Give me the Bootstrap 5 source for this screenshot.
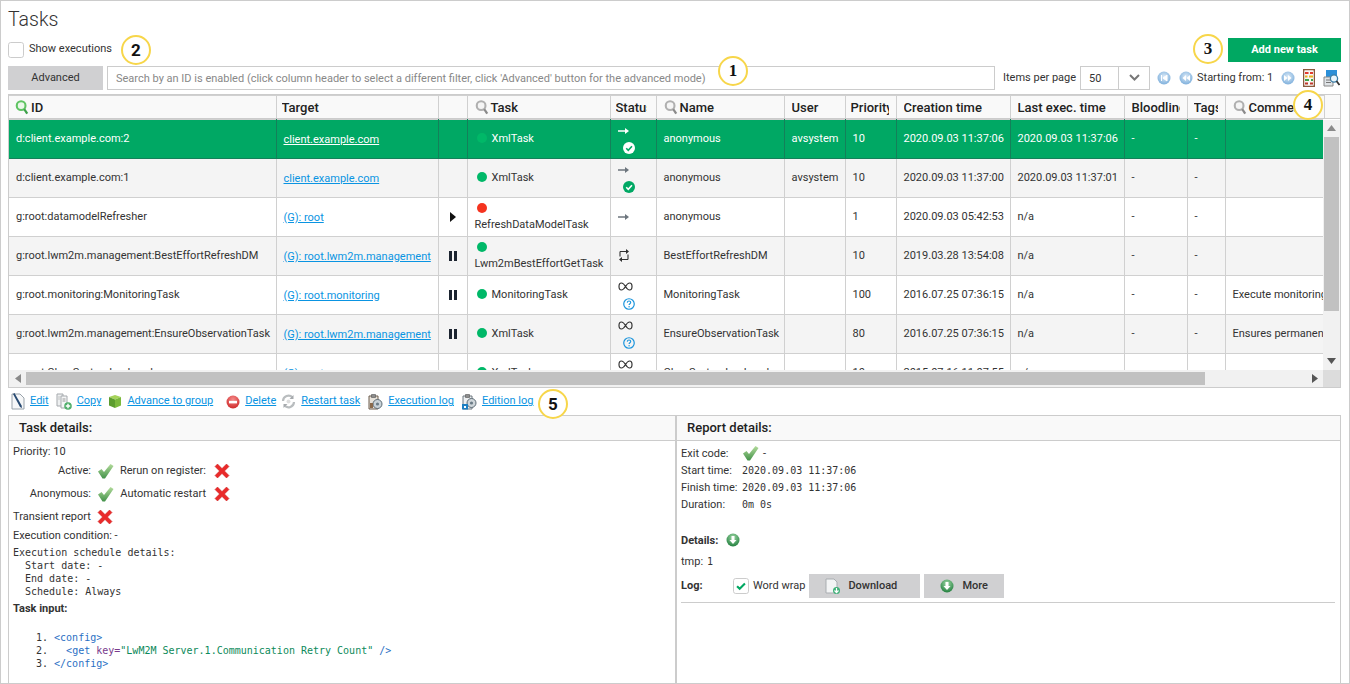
<!DOCTYPE html>
<html lang="en">
<head>
    <meta charset="UTF-8">
    <meta name="viewport" content="width=device-width, initial-scale=1.0">
    <title>Tasks</title>
    <link href="https://cdn.jsdelivr.net/npm/bootstrap@5.3.0/dist/css/bootstrap.min.css" rel="stylesheet">
    <style>
        html, body { height: 100%; overflow: hidden; }
        body { font-family: Roboto, "Liberation Sans", sans-serif; font-size: 11px; color: #333; background: #fff; }
        a { color: #0a94e2; }
        .tk-page { position: relative; height: 684px; border: 1px solid #ccc; padding: 0 8px 0 7px; overflow: hidden; }
        .tk-title { font-size: 19.5px; font-weight: 300; line-height: 24px; margin: 7px 0 0; height: 30px; color: #333; }
        .tk-row2 { height: 28px; }
        .tk-show { margin-left: 5px; margin-top: -1px; }
        .tk-check { width: 16px; height: 16px; border: 1px solid #ccc; border-radius: 0; margin: 0; flex: none; box-shadow: none; }
        .tk-check:checked { background-color: #fff; border-color: #ccc; background-image: url("data:image/svg+xml,%3Csvg xmlns='http://www.w3.org/2000/svg' viewBox='0 0 16 16'%3E%3Cpath d='M3.500 8.200l3 3 6-6' fill='none' stroke='%2300a862' stroke-width='2.400'/%3E%3C/svg%3E"); }
        .tk-add { width: 113px; height: 24px; padding: 1px 0 0; border: 0; border-radius: 0; background: #00a862; color: #fff; font-size: 11px; font-weight: 700; }
        .tk-row3 { height: 24px; margin-bottom: 4px; white-space: nowrap; }
        .tk-adv { width: 95px; height: 24px; padding: 2px 0 0; border: 0; border-radius: 0; background: #d0d0d2; color: #333; font-size: 11px; flex: none; }
        .tk-search { width: 888px; height: 24px; margin-left: 4px; padding: 2px 8px 0; border: 1px solid #ccc; border-radius: 0; font-size: 11px; color: #333; flex: none; }
        .tk-search::placeholder { color: #888; opacity: 1; }
        .tk-perpage { margin-left: 8px; width: 77px; padding-top: 2px; flex: none; }
        .tk-select { width: 70px; height: 24px; border: 1px solid #ccc; flex: none; }
        .tk-select-val { width: 38px; padding: 2px 0 0 8px; line-height: 20px; border-right: 1px solid #ccc; }
        .tk-select-arrow { flex: 1; }
        .tk-pager { margin-left: 7px; }
        .tk-pager-text { padding-top: 2px; }
        .tk-grid-box { border: 1px solid #ccc; height: 294px; width: 1333px; }
        .tk-grid-view { width: 1314px; height: 251px; overflow: hidden; flex: none; }
        .tk-head-view { width: 1331px; overflow: hidden; background: #f9f9f9; border-bottom: 1px solid #ccc; }
        .tk-grid { table-layout: fixed; width: 1315px; margin: 0; --bs-table-bg: transparent; --bs-table-border-color: #d0d0d0; font-size: 11px; color: #333; border-color: #d0d0d0; }
        .tk-grid th, .tk-grid td { padding: 0 7px; overflow: hidden; white-space: nowrap; vertical-align: middle; line-height: 16px; border-top: 0; }
        .tk-grid tr > :first-child { border-left: 0; }
        .tk-grid th { height: 23px; padding: 2px 7px 0 5px; background: #f9f9f9; font-size: 13px; font-weight: 500; color: #222; border-bottom: 0; }
        .tk-grid th.tk-th-first { padding-left: 4px; }
        .tk-grid th.tk-th-wide { padding-left: 7px; }
        .tk-grid th.tk-th-mid { padding-left: 6px; }
        .tk-grid td { height: 39px; border-bottom: 1px solid #d0d0d0; }
        .tk-grid td a { display: inline-block; padding-top: 2px; }
        .tk-grid tbody tr:nth-child(even) td { background: #f4f4f4; }
        .tk-grid tbody tr.tk-sel td { background: #00a864; color: #fff; border-color: #14805a; }
        .tk-grid tbody tr.tk-sel a { color: #fff; }
        .tk-clip { overflow: hidden; }
        .tk-clip-status { width: 31px; }
        .tk-mag { width: 14px; height: 16px; margin: 0 2px 0 2px; vertical-align: text-bottom; }
        .c-id { width: 267px; } .c-target { width: 162px; } .c-ctl { width: 29px; } .c-task { width: 143px; }
        .c-status { width: 46px; } .c-name { width: 128px; } .c-user { width: 61px; } .c-prio { width: 51px; }
        .c-created { width: 114px; } .c-last { width: 114px; } .c-blood { width: 63px; } .c-tags { width: 38px; } .c-comment { width: 99px; }
        .tk-dot { display: inline-block; width: 10px; height: 10px; border-radius: 50%; background: #00b868; margin: 0 5px 0 2px; vertical-align: -1px; }
        .tk-dot-red { background: #f5331f; }
        .tk-stack { padding-top: 3px; }
        .tk-stat-sub { margin: 7px 0 0 5px; }
        .tk-okc-w { color: #fff; --tick: #00a864; }
        .tk-okc-g { color: #00a864; --tick: #fff; }
        .tk-hbar { height: 17px; background: #f1f1f1; }
        .tk-hthumb { width: 1179px; height: 13px; background: #c1c1c1; }
        .tk-vbar { width: 17px; background: #f1f1f1; height: 250px; margin-top: 1px; flex: none; }
        .tk-vthumb { width: 15px; height: 174px; background: #c1c1c1; }
        .tk-corner { width: 17px; height: 17px; background: #dcdcdc; flex: none; }
        .tk-arrow-cell { width: 17px; height: 17px; }
        .tk-arrow-space { flex: 1; }
        .tk-actions { height: 27px; gap: 5px; padding: 1px 0 0 3px; }
        .tk-actions a { margin-right: 2px; }
        .tk-panels { width: 1333px; height: 270px; }
        .tk-panel { border: 1px solid #ccc; border-bottom: 0; overflow: hidden; }
        .tk-panel-left { width: 668px; }
        .tk-panel-right { width: 665px; }
        .tk-panel-head { height: 25px; line-height: 24px; padding-left: 10px; background: #f9f9f9; border-bottom: 1px solid #ccc; font-size: 13px; font-weight: 500; color: #222; }
        .tk-panel-body { padding: 3px 4px; line-height: 16px; }
        .tk-flag { height: 23px; white-space: nowrap; }
        .tk-flag-label { width: 78px; text-align: right; margin-right: 6px; }
        .tk-flag-label2 { width: 87px; text-align: right; margin: 0 8px 0 5px; }
        .tk-cond { margin-top: -1px; }
        .tk-mono { font-family: "DejaVu Sans Mono", monospace; font-size: 10px; line-height: 13px; margin: 0; color: #333; }
        .tk-sched { margin-top: 2px; }
        .tk-input-title { margin-top: 3px; }
        .tk-tag { color: #2a6fc4; } .tk-attr { color: #7a3b8c; } .tk-str { color: #0c8a5a; }
        .tk-code { margin: 14px 0 0; padding-left: 23px; }
        .tk-strong { font-weight: 700; }
        .tk-kv { height: 17px; line-height: 17px; }
        .tk-kv-first { margin-top: 1px; }
        .tk-kv-details { margin-top: 19px; }
        .tk-kv-tmp { margin-top: 4px; }
        .tk-log { margin-top: 4px; white-space: nowrap; }
        .tk-kv-label { width: 61px; flex: none; }
        .tk-log-label { width: 52px; flex: none; }
        .tk-logbtn { height: 24px; padding: 1px 0 0; border: 0; border-radius: 0; background: #d0d0d2; color: #333; font-size: 11px; font-weight: 500; flex: none; }
        .tk-logbtn-dl { width: 111px; margin-left: 4px; }
        .tk-logbtn-more { width: 80px; margin-left: 4px; }
        .tk-rule { height: 1px; background: #ccc; margin: 4px 1px 0 0; }
        .tk-note { position: absolute; width: 30px; height: 30px; border: 2px solid #f7d64a; border-radius: 50%; background: #fff; color: #111; text-align: center; font-size: 17px; line-height: 26px; font-weight: 700; }
        .tk-note-serif { font-family: "Liberation Serif", serif; }
        .tk-n1 { left: 717px; top: 55px; } .tk-n2 { left: 120px; top: 34px; } .tk-n3 { left: 1192px; top: 33px; }
        .tk-n4 { left: 1292px; top: 89px; } .tk-n5 { left: 537px; top: 388px; }
    </style>
</head>
<body>
    <svg width="0" height="0" class="d-block">
        <defs>
            <radialGradient id="gBlue" cx="50%" cy="40%" r="60%"><stop offset="0" stop-color="#dcebf8"/><stop offset="1" stop-color="#7fb0dc"/></radialGradient>
            <radialGradient id="gGreen" cx="50%" cy="30%" r="70%"><stop offset="0" stop-color="#9cd6a4"/><stop offset="1" stop-color="#23803f"/></radialGradient>
            <radialGradient id="gRed" cx="50%" cy="30%" r="70%"><stop offset="0" stop-color="#f58a8a"/><stop offset="1" stop-color="#cf2a2a"/></radialGradient>
            <linearGradient id="gCheck" x1="0" y1="0" x2="0" y2="1"><stop offset="0" stop-color="#b4dc9c"/><stop offset="1" stop-color="#43924a"/></linearGradient>
            <symbol id="i-mag-green" viewBox="0 0 16 17"><circle cx="7" cy="7" r="5" fill="#eaf8ea" stroke="#5fc463" stroke-width="2.400"/><path d="M10.500 11l3.500 5" stroke="#3ea14a" stroke-width="2.600"/></symbol>
            <symbol id="i-mag-gray" viewBox="0 0 16 17"><circle cx="7" cy="7" r="5" fill="#f5f5f5" stroke="#b0b0b0" stroke-width="2.400"/><path d="M10.500 11l3.500 5" stroke="#8b8b8b" stroke-width="2.600"/></symbol>
            <symbol id="i-arrow" viewBox="0 0 11 8"><path d="M0 4h8" stroke="currentColor" stroke-width="1.500"/><path d="M7 1l4 3-4 3z" fill="currentColor"/></symbol>
            <symbol id="i-loop" viewBox="0 0 12 15"><path d="M2 3.500h8M2 11.500h8M2 3.500v5M10 6.500v5" fill="none" stroke="#333" stroke-width="1.100"/><path d="M8 1l3 2.500L8 6zM4 9l-3 2.500L4 14z" fill="#333"/></symbol>
            <symbol id="i-inf" viewBox="0 0 15 9"><path d="M7.500 4.500C6 2 4.800 1 3.400 1 1.900 1 1 2.600 1 4.500S1.900 8 3.400 8c1.400 0 2.600-1 4.100-3.500C9 2 10.200 1 11.600 1 13.100 1 14 2.600 14 4.500S13.100 8 11.600 8C10.200 8 9 7 7.500 4.500z" fill="none" stroke="#333" stroke-width="1.200"/></symbol>
            <symbol id="i-okc" viewBox="0 0 13 13"><circle cx="6.500" cy="6.500" r="6.500" fill="currentColor"/><path d="M3.500 6.800l2.200 2.200 4-4.400" fill="none" stroke="var(--tick)" stroke-width="1.700"/></symbol>
            <symbol id="i-help" viewBox="0 0 13 13"><circle cx="6.500" cy="6.500" r="5.700" fill="none" stroke="#1a94dc" stroke-width="1.300"/><path d="M4.600 5c.2-1.200 1-1.700 1.900-1.700 1.100 0 1.900.7 1.900 1.600 0 1.300-1.800 1.400-1.800 2.800" fill="none" stroke="#1a94dc" stroke-width="1.200"/><circle cx="6.600" cy="9.500" r=".8" fill="#1a94dc"/></symbol>
            <symbol id="i-pause" viewBox="0 0 8 10"><path d="M0 0h3v10H0zM5 0h3v10H5z" fill="#1c2430"/></symbol>
            <symbol id="i-play" viewBox="0 0 8 10"><path d="M1 0l6 5-6 5z" fill="#111"/></symbol>
            <symbol id="i-first" viewBox="0 0 14 14"><circle cx="7" cy="7" r="6.500" fill="url(#gBlue)"/><path d="M4.500 4v6M10 4L6 7l4 3z" fill="#fff" stroke="#fff"/></symbol>
            <symbol id="i-prev" viewBox="0 0 14 14"><circle cx="7" cy="7" r="6.500" fill="url(#gBlue)"/><path d="M7 4L3.500 7 7 10zM11 4L7.500 7 11 10z" fill="#fff"/></symbol>
            <symbol id="i-next" viewBox="0 0 14 14"><circle cx="7" cy="7" r="6.500" fill="url(#gBlue)"/><path d="M7 4l3.500 3L7 10zM3 4l3.500 3L3 10z" fill="#fff"/></symbol>
            <symbol id="i-abacus" viewBox="0 0 12 18"><path d="M0 0h12v1.500H0zM0 16.500h12V18H0zM0 1h1.500v16H0zM10.500 1H12v16h-1.500z" fill="#8a5a3c"/><path d="M1.500 1.500h9v15h-9z" fill="#f8f6f2"/><path d="M2 3h3.500v2H2zM7 3h3v2H7z" fill="#e23b2e"/><path d="M2 6.500h2.500v2H2zM6 6.500h4v2H6z" fill="#e8b020"/><path d="M2 10h4v2H2zM8 10h2v2H8z" fill="#3fa34a"/><path d="M2 13.500h3v2H2zM7 13.500h3v2H7z" fill="#c0392b"/></symbol>
            <symbol id="i-report" viewBox="0 0 17 18"><path d="M3 1h11v9H3z" fill="#2b8fd8"/><path d="M1 8h9v9H1z" fill="#dfe3e6" stroke="#888"/><circle cx="11" cy="9.500" r="3.600" fill="#e9f5fc" stroke="#3a7ea8" stroke-width="1.300"/><path d="M13.500 12l3 4" stroke="#333" stroke-width="1.800"/><path d="M3 11h5M3 13.500h5" stroke="#777"/></symbol>
            <symbol id="i-edit" viewBox="0 0 14 17"><path d="M1 1h8l4 4v11H1z" fill="#f6f7f8" stroke="#9aa3ab"/><path d="M2 1l7 13 2 1-.4-2.400L3.500 0z" fill="#284a72"/></symbol>
            <symbol id="i-copy" viewBox="0 0 16 17"><path d="M1 1h6v12H1z" fill="#eef0f1" stroke="#a5a9ad"/><path d="M5 3h6v12H5z" fill="#f5f6f7" stroke="#a5a9ad"/><path d="M6.500 6h3M6.500 8h3M2.500 4h1M2.500 6h1" stroke="#999"/><circle cx="12" cy="13" r="3.800" fill="#4fae6a"/><path d="M12 10.800v4.400M9.800 13h4.400" stroke="#fff" stroke-width="1.400"/></symbol>
            <symbol id="i-cube" viewBox="0 0 14 15"><path d="M1 3l6-2 6 2-6 2.500z" fill="#a6d35a"/><path d="M1 3l6 2.500V14l-6-2.500z" fill="#5c9c2e"/><path d="M13 3L7 5.500V14l6-2.500z" fill="#7bb83c"/></symbol>
            <symbol id="i-del" viewBox="0 0 14 14"><circle cx="7" cy="7" r="6.500" fill="url(#gRed)"/><path d="M3 5.800h8v2.600H3z" fill="#fff"/></symbol>
            <symbol id="i-restart" viewBox="0 0 15 15"><path d="M2 7a5.500 5.500 0 0 1 9.500-3.600M13 8a5.500 5.500 0 0 1-9.500 3.600" fill="none" stroke="#b9bdbf" stroke-width="2.200"/><path d="M12.500 1v4h-4zM2.500 14v-4h4z" fill="#a6aaad"/><circle cx="7.500" cy="7.500" r="2" fill="#ddd"/></symbol>
            <symbol id="i-exec" viewBox="0 0 16 17"><path d="M2 3h9v13H2z" fill="#e7e2da" stroke="#6b5a4a"/><path d="M4.500 1.500h4v3h-4z" fill="#8d8d8d" stroke="#555" stroke-width=".6"/><circle cx="10.500" cy="11" r="4.500" fill="#c9d2d8" stroke="#5c6a74"/><circle cx="10.500" cy="11" r="1.600" fill="#6b7b86"/><path d="M3 10h3v5H3z" fill="#8a6a4c"/></symbol>
            <symbol id="i-hist" viewBox="0 0 16 17"><path d="M2 3h9v13H2z" fill="#eceff1" stroke="#6f7880"/><path d="M4.500 1.500h4v3h-4z" fill="#8d8d8d" stroke="#555" stroke-width=".6"/><circle cx="10.500" cy="10" r="4.500" fill="#cfd6da" stroke="#5c6a74"/><circle cx="10.500" cy="10" r="1.600" fill="#6b7b86"/><path d="M1 11h6v5.500H1z" fill="#1d7fc2"/><path d="M3 13h2v2H3z" fill="#fff"/></symbol>
            <symbol id="i-check" viewBox="0 0 17 16"><path d="M1 8.500l3.500-2.500 2.500 3L13.500 1 16.500 3 8 15.500H5.500z" fill="url(#gCheck)"/></symbol>
            <symbol id="i-cross" viewBox="0 0 16 16"><path d="M1 3.500L3.500 1 8 5.500 12.500 1 15 3.500 10.500 8 15 12.500 12.500 15 8 10.500 3.500 15 1 12.500 5.500 8z" fill="#ea2a2a" stroke="#c81e1e" stroke-width=".5"/></symbol>
            <symbol id="i-down" viewBox="0 0 14 14"><ellipse cx="7" cy="7" rx="6.500" ry="6.500" fill="url(#gGreen)"/><path d="M5.500 3h3v4h2L7 11 3.500 7h2z" fill="#fff"/></symbol>
            <symbol id="i-dlfile" viewBox="0 0 15 16"><path d="M1 1h8l3 3v11H1z" fill="#f3f4f5" stroke="#a9adb1"/><circle cx="11.500" cy="12.500" r="3.500" fill="#3fb078"/><path d="M11.500 10v4.500M9.500 12.500l2 2.200 2-2.200" fill="none" stroke="#fff" stroke-width="1.200"/></symbol>
        </defs>
    </svg>

    <div class="tk-page d-flex flex-column">
        <h1 class="tk-title">Tasks</h1>

        <div class="tk-row2 d-flex align-items-start justify-content-between">
            <div class="d-flex align-items-center mt-1">
                <input class="form-check-input tk-check" type="checkbox">
                <span class="tk-show">Show executions</span>
            </div>
            <button class="btn tk-add">Add new task</button>
        </div>

        <div class="tk-row3 d-flex align-items-center">
            <button class="btn tk-adv">Advanced</button>
            <input class="form-control tk-search" type="text" placeholder="Search by an ID is enabled (click column header to select a different filter, click 'Advanced' button for the advanced mode)">
            <span class="tk-perpage">Items per page</span>
            <div class="tk-select d-flex align-items-center">
                <span class="tk-select-val">50</span>
                <span class="tk-select-arrow text-center"><svg width="11" height="7" viewBox="0 0 11 7"><path d="M1 1l4.500 4.500L10 1" fill="none" stroke="#777" stroke-width="2"/></svg></span>
            </div>
            <div class="tk-pager d-flex align-items-center">
                <svg width="14" height="14"><use href="#i-first"/></svg>
                <svg class="ms-2" width="14" height="14"><use href="#i-prev"/></svg>
                <span class="ms-1 tk-pager-text">Starting from: 1</span>
                <svg class="ms-2" width="14" height="14"><use href="#i-next"/></svg>
                <svg class="ms-2" width="12" height="18"><use href="#i-abacus"/></svg>
                <svg class="ms-2" width="17" height="18"><use href="#i-report"/></svg>
            </div>
        </div>

        <div class="tk-grid-box d-flex flex-column">
            <div class="tk-head-view">
                <table class="table table-bordered tk-grid">
                    <colgroup><col class="c-id"><col class="c-target"><col class="c-ctl"><col class="c-task"><col class="c-status"><col class="c-name"><col class="c-user"><col class="c-prio"><col class="c-created"><col class="c-last"><col class="c-blood"><col class="c-tags"><col class="c-comment"></colgroup>
                    <thead>
                        <tr>
                            <th class="tk-th-first"><div class="tk-clip"><svg class="tk-mag"><use href="#i-mag-green"/></svg>ID</div></th>
                            <th><div class="tk-clip">Target</div></th>
                            <th></th>
                            <th><div class="tk-clip"><svg class="tk-mag"><use href="#i-mag-gray"/></svg>Task</div></th>
                            <th><div class="tk-clip tk-clip-status">Status</div></th>
                            <th><div class="tk-clip"><svg class="tk-mag"><use href="#i-mag-gray"/></svg>Name</div></th>
                            <th class="tk-th-wide"><div class="tk-clip">User</div></th>
                            <th><div class="tk-clip">Priority</div></th>
                            <th class="tk-th-wide"><div class="tk-clip">Creation time</div></th>
                            <th class="tk-th-wide"><div class="tk-clip">Last exec. time</div></th>
                            <th class="tk-th-wide"><div class="tk-clip">Bloodline</div></th>
                            <th class="tk-th-mid"><div class="tk-clip">Tags</div></th>
                            <th><div class="tk-clip"><svg class="tk-mag"><use href="#i-mag-gray"/></svg>Comment</div></th>
                        </tr>
                    </thead>
                </table>
            </div>
            <div class="d-flex">
                <div class="tk-grid-view">
                    <table class="table table-bordered tk-grid">
                        <colgroup><col class="c-id"><col class="c-target"><col class="c-ctl"><col class="c-task"><col class="c-status"><col class="c-name"><col class="c-user"><col class="c-prio"><col class="c-created"><col class="c-last"><col class="c-blood"><col class="c-tags"><col class="c-comment"></colgroup>
                        <tbody>
                            <tr class="tk-sel">
                                <td>d:client.example.com:2</td>
                                <td><a href="#">client.example.com</a></td>
                                <td></td>
                                <td><span class="tk-dot"></span>XmlTask</td>
                                <td><div class="tk-stack d-flex flex-column align-items-start"><svg width="11" height="8"><use href="#i-arrow"/></svg><svg class="tk-stat-sub tk-okc-w" width="12" height="12"><use href="#i-okc"/></svg></div></td>
                                <td>anonymous</td>
                                <td>avsystem</td>
                                <td>10</td>
                                <td>2020.09.03 11:37:06</td>
                                <td>2020.09.03 11:37:06</td>
                                <td>-</td>
                                <td>-</td>
                                <td></td>
                            </tr>
                            <tr>
                                <td>d:client.example.com:1</td>
                                <td><a href="#">client.example.com</a></td>
                                <td></td>
                                <td><span class="tk-dot"></span>XmlTask</td>
                                <td><div class="tk-stack d-flex flex-column align-items-start"><svg width="11" height="8" class="text-secondary"><use href="#i-arrow"/></svg><svg class="tk-stat-sub tk-okc-g" width="12" height="12"><use href="#i-okc"/></svg></div></td>
                                <td>anonymous</td>
                                <td>avsystem</td>
                                <td>10</td>
                                <td>2020.09.03 11:37:00</td>
                                <td>2020.09.03 11:37:01</td>
                                <td>-</td>
                                <td>-</td>
                                <td></td>
                            </tr>
                            <tr>
                                <td>g:root:datamodelRefresher</td>
                                <td><a href="#">(G): root</a></td>
                                <td class="text-center"><svg width="8" height="10"><use href="#i-play"/></svg></td>
                                <td><span class="tk-dot tk-dot-red"></span><br>RefreshDataModelTask</td>
                                <td><svg width="11" height="8" class="text-secondary"><use href="#i-arrow"/></svg></td>
                                <td>anonymous</td>
                                <td></td>
                                <td>1</td>
                                <td>2020.09.03 05:42:53</td>
                                <td>n/a</td>
                                <td>-</td>
                                <td>-</td>
                                <td></td>
                            </tr>
                            <tr>
                                <td>g:root.lwm2m.management:BestEffortRefreshDM</td>
                                <td><a href="#">(G): root.lwm2m.management</a></td>
                                <td class="text-center"><svg width="8" height="10"><use href="#i-pause"/></svg></td>
                                <td><span class="tk-dot"></span><br>Lwm2mBestEffortGetTask</td>
                                <td><svg width="12" height="15"><use href="#i-loop"/></svg></td>
                                <td>BestEffortRefreshDM</td>
                                <td></td>
                                <td>10</td>
                                <td>2019.03.28 13:54:08</td>
                                <td>n/a</td>
                                <td>-</td>
                                <td>-</td>
                                <td></td>
                            </tr>
                            <tr>
                                <td>g:root.monitoring:MonitoringTask</td>
                                <td><a href="#">(G): root.monitoring</a></td>
                                <td class="text-center"><svg width="8" height="10"><use href="#i-pause"/></svg></td>
                                <td><span class="tk-dot"></span>MonitoringTask</td>
                                <td><div class="tk-stack d-flex flex-column align-items-start"><svg width="15" height="9"><use href="#i-inf"/></svg><svg class="tk-stat-sub" width="12" height="12"><use href="#i-help"/></svg></div></td>
                                <td>MonitoringTask</td>
                                <td></td>
                                <td>100</td>
                                <td>2016.07.25 07:36:15</td>
                                <td>n/a</td>
                                <td>-</td>
                                <td>-</td>
                                <td>Execute monitoring of devices</td>
                            </tr>
                            <tr>
                                <td>g:root.lwm2m.management:EnsureObservationTask</td>
                                <td><a href="#">(G): root.lwm2m.management</a></td>
                                <td class="text-center"><svg width="8" height="10"><use href="#i-pause"/></svg></td>
                                <td><span class="tk-dot"></span>XmlTask</td>
                                <td><div class="tk-stack d-flex flex-column align-items-start"><svg width="15" height="9"><use href="#i-inf"/></svg><svg class="tk-stat-sub" width="12" height="12"><use href="#i-help"/></svg></div></td>
                                <td>EnsureObservationTask</td>
                                <td></td>
                                <td>80</td>
                                <td>2016.07.25 07:36:15</td>
                                <td>n/a</td>
                                <td>-</td>
                                <td>-</td>
                                <td>Ensures permanent observation</td>
                            </tr>
                            <tr>
                                <td>g:root:ClearSystemLogLevel</td>
                                <td><a href="#">(G): root</a></td>
                                <td></td>
                                <td><span class="tk-dot"></span>XmlTask</td>
                                <td><div class="tk-stack d-flex flex-column align-items-start"><svg width="15" height="9"><use href="#i-inf"/></svg><svg class="tk-stat-sub" width="12" height="12"><use href="#i-help"/></svg></div></td>
                                <td>ClearSystemLogLevel</td>
                                <td></td>
                                <td>10</td>
                                <td>2015.07.16 11:07:55</td>
                                <td>n/a</td>
                                <td>-</td>
                                <td>-</td>
                                <td></td>
                            </tr>
                        </tbody>
                    </table>
                </div>
                <div class="tk-vbar d-flex flex-column align-items-center">
                    <div class="tk-arrow-cell d-flex align-items-center justify-content-center"><svg width="9" height="6"><path d="M4.500 0L9 6H0z" fill="#8a8a8a"/></svg></div>
                    <div class="tk-vthumb"></div>
                    <div class="tk-arrow-space"></div>
                    <div class="tk-arrow-cell d-flex align-items-center justify-content-center"><svg width="9" height="6"><path d="M4.500 6L9 0H0z" fill="#555"/></svg></div>
                </div>
            </div>
            <div class="d-flex">
                <div class="tk-hbar d-flex flex-grow-1 align-items-center">
                    <div class="tk-arrow-cell d-flex align-items-center justify-content-center"><svg width="6" height="9"><path d="M0 4.500L6 0v9z" fill="#8a8a8a"/></svg></div>
                    <div class="tk-hthumb"></div>
                    <div class="tk-arrow-space"></div>
                    <div class="tk-arrow-cell d-flex align-items-center justify-content-center"><svg width="6" height="9"><path d="M6 4.500L0 0v9z" fill="#555"/></svg></div>
                </div>
                <div class="tk-corner"></div>
            </div>
        </div>

        <div class="tk-actions d-flex align-items-center">
            <svg width="14" height="17"><use href="#i-edit"/></svg><a href="#">Edit</a>
            <svg width="16" height="17"><use href="#i-copy"/></svg><a href="#">Copy</a>
            <svg width="14" height="15"><use href="#i-cube"/></svg><a href="#" class="me-2">Advance to group</a>
            <svg width="14" height="14"><use href="#i-del"/></svg><a href="#" class="me-0">Delete</a>
            <svg width="15" height="15"><use href="#i-restart"/></svg><a href="#">Restart task</a>
            <svg width="16" height="17"><use href="#i-exec"/></svg><a href="#">Execution log</a>
            <svg width="16" height="17"><use href="#i-hist"/></svg><a href="#">Edition log</a>
        </div>

        <div class="tk-panels d-flex">
            <div class="tk-panel tk-panel-left">
                <div class="tk-panel-head">Task details:</div>
                <div class="tk-panel-body">
                    <div>Priority: 10</div>
                    <div class="tk-flag d-flex align-items-center"><span class="tk-flag-label">Active:</span><svg width="17" height="16"><use href="#i-check"/></svg><span class="tk-flag-label2">Rerun on register:</span><svg width="16" height="16"><use href="#i-cross"/></svg></div>
                    <div class="tk-flag d-flex align-items-center"><span class="tk-flag-label">Anonymous:</span><svg width="17" height="16"><use href="#i-check"/></svg><span class="tk-flag-label2">Automatic restart</span><svg width="16" height="16"><use href="#i-cross"/></svg></div>
                    <div class="tk-flag d-flex align-items-center"><span class="tk-flag-label text-start">Transient report</span><svg width="16" height="16"><use href="#i-cross"/></svg></div>
                    <div class="tk-cond">Execution condition: -</div>
<pre class="tk-mono tk-sched">Execution schedule details:
  Start date: -
  End date: -
  Schedule: Always</pre>
                    <div class="tk-strong tk-input-title">Task input:</div>
<pre class="tk-mono tk-code">1. <span class="tk-tag">&lt;config&gt;</span>
2.   <span class="tk-tag">&lt;get</span> <span class="tk-attr">key=</span><span class="tk-str">"LwM2M Server.1.Communication Retry Count"</span> <span class="tk-tag">/&gt;</span>
3. <span class="tk-tag">&lt;/config&gt;</span></pre>
                </div>
            </div>
            <div class="tk-panel tk-panel-right">
                <div class="tk-panel-head">Report details:</div>
                <div class="tk-panel-body">
                    <div class="tk-kv tk-kv-first d-flex align-items-center"><span class="tk-kv-label">Exit code:</span><svg width="17" height="16"><use href="#i-check"/></svg><span class="ms-1">-</span></div>
                    <div class="tk-kv d-flex align-items-center"><span class="tk-kv-label">Start time:</span><span class="tk-mono">2020.09.03 11:37:06</span></div>
                    <div class="tk-kv d-flex align-items-center"><span class="tk-kv-label">Finish time:</span><span class="tk-mono">2020.09.03 11:37:06</span></div>
                    <div class="tk-kv d-flex align-items-center"><span class="tk-kv-label">Duration:</span><span class="tk-mono">0m 0s</span></div>
                    <div class="tk-kv tk-kv-details d-flex align-items-center"><span class="tk-strong">Details:</span><svg class="ms-2" width="14" height="14"><use href="#i-down"/></svg></div>
                    <div class="tk-kv tk-kv-tmp d-flex align-items-center"><span>tmp:</span><span class="tk-mono ms-1">1</span></div>
                    <div class="tk-log d-flex align-items-center">
                        <span class="tk-strong tk-log-label">Log:</span>
                        <input class="form-check-input tk-check" type="checkbox" checked>
                        <span class="ms-1">Word wrap</span>
                        <button class="btn tk-logbtn tk-logbtn-dl d-flex align-items-center"><svg class="ms-3 me-2" width="15" height="16"><use href="#i-dlfile"/></svg>Download</button>
                        <button class="btn tk-logbtn tk-logbtn-more d-flex align-items-center"><svg class="ms-3 me-2" width="14" height="14"><use href="#i-down"/></svg>More</button>
                    </div>
                    <div class="tk-rule"></div>
                </div>
            </div>
        </div>

        <div class="tk-note tk-note-serif tk-n1">1</div>
        <div class="tk-note tk-n2">2</div>
        <div class="tk-note tk-note-serif tk-n3">3</div>
        <div class="tk-note tk-note-serif tk-n4">4</div>
        <div class="tk-note tk-n5">5</div>
    </div>
    <script src="https://cdn.jsdelivr.net/npm/bootstrap@5.3.0/dist/js/bootstrap.bundle.min.js"></script>
</body>
</html>
